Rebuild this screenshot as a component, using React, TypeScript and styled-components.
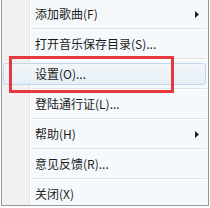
import React from 'react';
import styled, { createGlobalStyle } from 'styled-components';

interface MenuEntry {
  label: string;
  submenu?: boolean;
  hover?: boolean;
}

const entries: MenuEntry[] = [
  { label: '添加歌曲(F)', submenu: true },
  { label: '打开音乐保存目录(S)...' },
  { label: '设置(O)...', hover: true },
  { label: '登陆通行证(L)...' },
  { label: '帮助(H)', submenu: true },
  { label: '意见反馈(R)...' },
  { label: '关闭(X)' }
];

const GlobalStyle = createGlobalStyle`
  html, body {
    margin: 0;
    padding: 0;
    background: #ffffff;
  }
  body {
    font-family: "Noto Sans CJK SC", "Noto Sans", sans-serif;
  }
`;

const Page = styled.div`
  position: relative;
  width: 210px;
  height: 208px;
`;

const Menu = styled.div`
  margin-left: 1px;
  width: 206px;
  padding: 3px 0 0;
  border: 1px solid #979797;
  border-top: none;
  display: flex;
  flex-direction: column;
  background: linear-gradient(
    to right,
    #f1f1f1 0,
    #f1f1f1 27px,
    #e2e3e3 27px,
    #e2e3e3 28px,
    #ffffff 28px,
    #ffffff 29px,
    #f6f9fc 29px
  );
`;

const Item = styled.div<{ $hover?: boolean }>`
  height: 22px;
  box-sizing: border-box;
  margin: 0 2px 0 1px;
  padding: 0 6px 0 31px;
  display: flex;
  align-items: center;
  justify-content: space-between;
  font-size: 12px;
  color: #1b1b1b;
  border: 1px solid ${p => (p.$hover ? '#c4d6ea' : 'transparent')};
  border-radius: 3px;
  background: ${p => (p.$hover ? 'linear-gradient(#f2f6fa, #e6eef6)' : 'transparent')};
`;

const Label = styled.span`
  line-height: 16px;
  white-space: nowrap;
`;

const Separator = styled.div`
  height: 8px;
  margin: 0 1px 0 29px;
  display: flex;
  flex-direction: column;
  justify-content: center;

  &::before {
    content: '';
    height: 1px;
    background: #dfe1e3;
  }
  &::after {
    content: '';
    height: 1px;
    background: #ffffff;
  }
`;

const Highlight = styled.div`
  position: absolute;
  left: 9px;
  top: 56px;
  width: 165px;
  height: 37px;
  box-sizing: border-box;
  border: 3px solid #e5393e;
`;

function Arrow (): React.ReactElement {
  return (
    <svg width='4' height='7' viewBox='0 0 4 7'>
      <path d='M0 0 L4 3.5 L0 7 Z' fill='#1f1f1f' />
    </svg>
  );
}

export default function App (): React.ReactElement {
  return (
    <Page>
      <GlobalStyle />
      <Menu>
        {entries.map((entry, i) => (
          <React.Fragment key={entry.label}>
            {i > 0 && <Separator />}
            <Item $hover={entry.hover}>
              <Label>{entry.label}</Label>
              {entry.submenu && <Arrow />}
            </Item>
          </React.Fragment>
        ))}
      </Menu>
      <Highlight />
    </Page>
  );
}
